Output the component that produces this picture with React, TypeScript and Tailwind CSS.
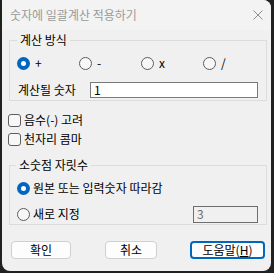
import React from "react"

function Radio({ checked }: { checked?: boolean }) {
  if (checked) {
    return (
      <span className="flex h-[13px] w-[13px] shrink-0 items-center justify-center rounded-full bg-[#0067c0]">
        <span className="h-[5px] w-[5px] rounded-full bg-white" />
      </span>
    )
  }
  return <span className="h-[13px] w-[13px] shrink-0 rounded-full border border-[#5d5d5d] bg-[#f7f7f7]" />
}

function Checkbox({ label }: { label: string }) {
  return (
    <div className="flex h-[16px] items-center gap-[3px] pl-[6px]">
      <span className="h-[13px] w-[13px] shrink-0 rounded-[3px] border border-[#5d5d5d] bg-[#f7f7f7]" />
      <span>{label}</span>
    </div>
  )
}

export default function App() {
  const ops = [
    { id: "add", label: "+", checked: true },
    { id: "sub", label: "-" },
    { id: "mul", label: "x" },
    { id: "div", label: "/" },
  ]

  return (
    <div className="h-[273px] w-[274px] bg-[#1f221f] pl-[2px] font-['Noto_Sans_CJK_KR','Malgun_Gothic',sans-serif] text-[12px] leading-[16px] text-black">
      <div className="flex h-[271px] w-[269px] flex-col overflow-hidden rounded-tr-[8px] rounded-b-[8px] bg-[#f0f0f0]">
        {/* Title bar */}
        <div className="flex h-[30px] shrink-0 items-center justify-between bg-[#f3f3f3] pl-[8px] pr-[8px]">
          <span className="text-[#9a9a9a]">숫자에 일괄계산 적용하기</span>
          <svg width="10" height="10" viewBox="0 0 10 10" className="text-[#8f8f8f]">
            <path d="M0.5 0.5 L9.5 9.5 M9.5 0.5 L0.5 9.5" stroke="currentColor" strokeWidth="1" />
          </svg>
        </div>

        {/* 계산 방식 */}
        <fieldset className="ml-[7px] mr-[4px] mt-[2px] border border-[#dcdcdc] pb-[2px]">
          <legend className="ml-[7px] px-[3px] leading-[16px]">계산 방식</legend>
          <div className="flex h-[16px] items-center pl-[7px] pt-0 mt-[7px]">
            {ops.map((op) => (
              <div key={op.id} className="flex w-[62px] items-center gap-[5px]">
                <Radio checked={op.checked} />
                <span>{op.label}</span>
              </div>
            ))}
          </div>
          <div className="mt-[11px] flex h-[16px] items-center pl-[8px]">
            <span className="w-[72px]">계산될 숫자</span>
            <div className="flex h-[16px] w-[168px] items-center border border-[#7a7a7a] bg-white pl-[3px]">1</div>
          </div>
        </fieldset>

        <div className="mt-[11px]">
          <Checkbox label="음수(-) 고려" />
        </div>
        <div className="mt-[3px]">
          <Checkbox label="천자리 콤마" />
        </div>

        {/* 소숫점 자릿수 */}
        <fieldset className="ml-[7px] mr-[4px] mt-[10px] border border-[#dcdcdc] pb-[1px]">
          <legend className="ml-[6px] px-[3px] leading-[16px]">소숫점 자릿수</legend>
          <div className="mt-[7px] flex h-[16px] items-center gap-[3px] pl-[7px]">
            <Radio checked />
            <span>원본 또는 입력숫자 따라감</span>
          </div>
          <div className="mt-[9px] flex h-[18px] items-center pl-[7px]">
            <div className="flex items-center gap-[3px]">
              <Radio />
              <span>새로 지정</span>
            </div>
            <div className="ml-auto mr-[8px] flex h-[17px] w-[65px] items-center border border-[#6e6e6e] bg-[#f0f0f0] pl-[3px] text-[#6e6e6e]">
              3
            </div>
          </div>
        </fieldset>

        {/* Buttons */}
        <div className="mt-[16px] flex h-[18px] items-center pl-[9px]">
          <button className="flex h-[18px] w-[60px] items-center justify-center rounded-[4px] border border-[#d0d0d0] bg-[#fdfdfd]">
            확인
          </button>
          <button className="ml-[34px] flex h-[18px] w-[52px] items-center justify-center rounded-[4px] border border-[#d0d0d0] bg-[#fdfdfd]">
            취소
          </button>
          <button className="ml-[33px] flex h-[18px] w-[75px] items-center justify-center rounded-[4px] border-2 border-[#0067c0] bg-[#fdfdfd]">
            도움말(<span className="underline">H</span>)
          </button>
        </div>
      </div>
    </div>
  )
}
